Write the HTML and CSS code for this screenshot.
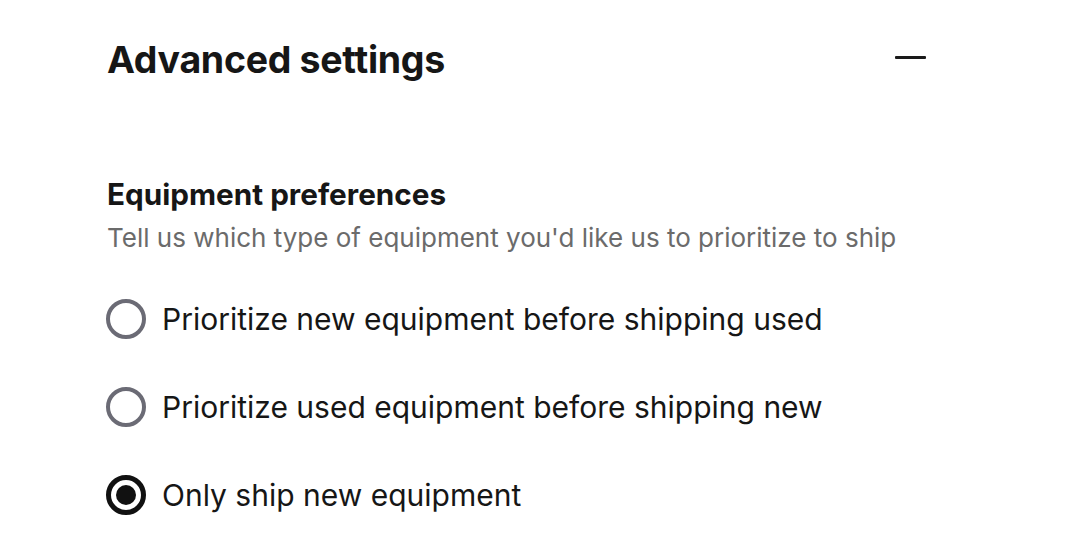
FILE: index.html
```html
<!DOCTYPE html>
<html lang="en">
<head>
<meta charset="utf-8">
<title>Advanced settings</title>
<link rel="stylesheet" href="styles.css">
</head>
<body>
<main class="panel">
  <header class="panel-header">
    <h1 class="panel-title">Advanced settings</h1>
    <button class="collapse-btn" aria-label="Collapse"><span class="minus"></span></button>
  </header>
  <section class="group">
    <h2 class="group-title">Equipment preferences</h2>
    <p class="group-desc">Tell us which type of equipment you'd like us to prioritize to ship</p>
    <div class="options">
      <label class="option"><span class="radio"></span><span class="option-label">Prioritize new equipment before shipping used</span></label>
      <label class="option"><span class="radio"></span><span class="option-label">Prioritize used equipment before shipping new</span></label>
      <label class="option"><span class="radio checked"></span><span class="option-label">Only ship new equipment</span></label>
    </div>
  </section>
</main>
</body>
</html>
```
FILE: styles.css
```css
html, body {
  margin: 0;
  padding: 0;
  background: #ffffff;
}
body {
  font-family: "Inter", "Liberation Sans", sans-serif;
  color: #161616;
}
.panel {
  padding: 0 146px 0 106px;
}
.panel-header {
  display: flex;
  align-items: center;
  justify-content: space-between;
  height: 118px;
}
.panel-title {
  margin: 0 0 0 1px;
  font-size: 37.5px;
  font-weight: 700;
  letter-spacing: -0.3px;
}
.collapse-btn {
  border: 0;
  background: none;
  padding: 0;
  width: 31px;
  height: 31px;
  display: flex;
  align-items: center;
  margin-top: -4px;
}
.minus {
  display: block;
  width: 31px;
  height: 3px;
  background: #1a1a1a;
  border-radius: 1px;
}
.group {
  padding-top: 56px;
}
.group-title {
  margin: 0 0 0 1px;
  font-size: 29.7px;
  font-weight: 700;
  line-height: 40px;
}
.group-desc {
  margin: 6px 0 0 1px;
  font-size: 26px;
  line-height: 36px;
  color: #6b6b6b;
}
.options {
  display: flex;
  flex-direction: column;
  gap: 44px;
  margin-top: 41px;
}
.option {
  display: flex;
  align-items: center;
  gap: 16px;
  height: 44px;
}
.radio {
  box-sizing: border-box;
  width: 40px;
  height: 40px;
  border-radius: 50%;
  border: 4px solid #6b6b75;
  display: flex;
  align-items: center;
  justify-content: center;
}
.radio.checked {
  border: 5px solid #111111;
}
.radio.checked::after {
  content: "";
  width: 20px;
  height: 20px;
  border-radius: 50%;
  background: #111111;
}
.option-label {
  font-size: 30px;
  line-height: 44px;
}
```
